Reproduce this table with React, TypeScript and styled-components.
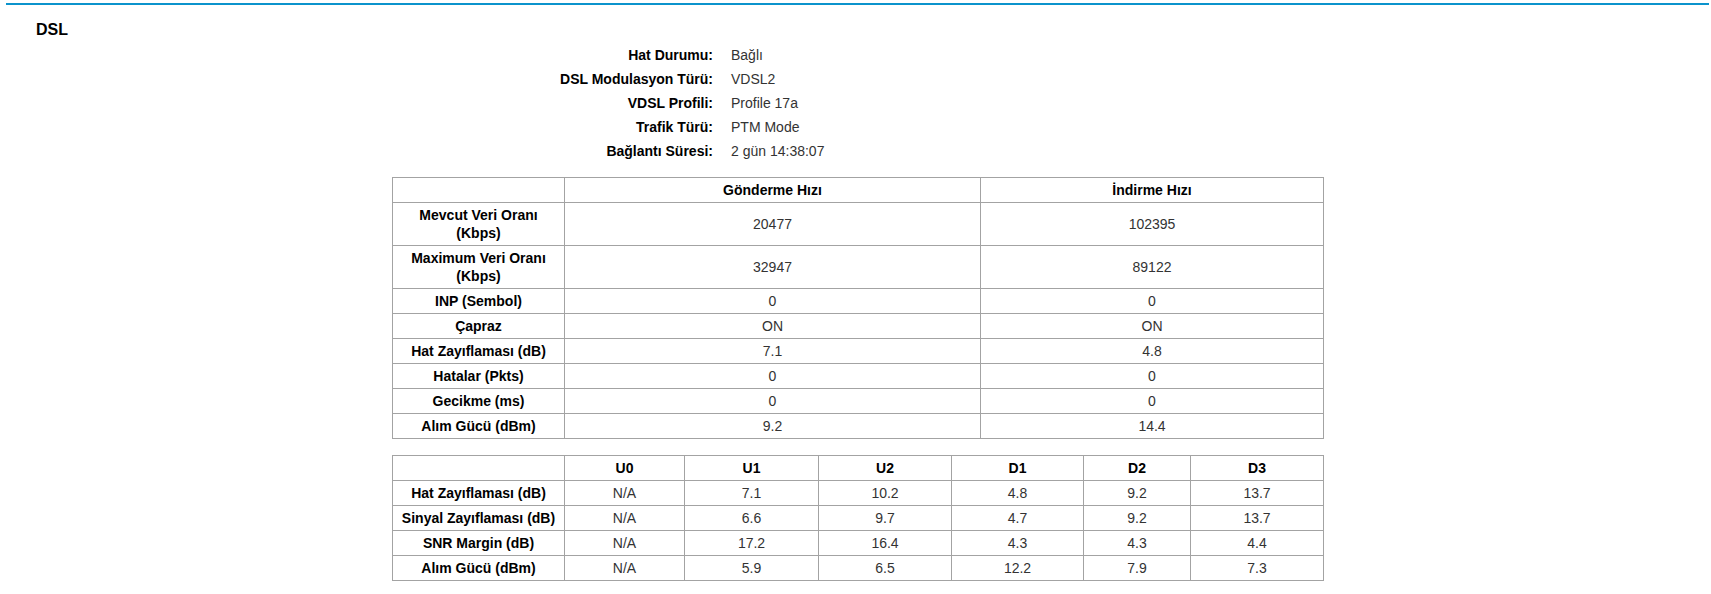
import React from "react";
import styled, { createGlobalStyle } from "styled-components";

const GlobalStyle = createGlobalStyle`
  html, body {
    margin: 0;
    padding: 0;
    background: #ffffff;
  }
  body {
    font-family: "Liberation Sans", Arial, Helvetica, sans-serif;
    color: #333333;
  }
`;

const Page = styled.div`
  padding: 0 2px 0 6px;
`;

const TopRule = styled.div`
  margin-top: 3px;
  height: 2px;
  background: #0b93cc;
`;

const Title = styled.h2`
  margin: 16px 0 0 30px;
  font-size: 16px;
  line-height: 18px;
  font-weight: bold;
  color: #000000;
`;

const Content = styled.div`
  width: 931px;
  margin: 0 auto;
`;

const InfoGrid = styled.div`
  display: grid;
  grid-template-columns: 321px 1fr;
  column-gap: 18px;
  margin-top: 4px;
  font-size: 14px;
  line-height: 24px;
`;

const InfoLabel = styled.div`
  text-align: right;
  font-weight: bold;
  color: #000000;
  white-space: nowrap;
`;

const InfoValue = styled.div`
  color: #333333;
  white-space: nowrap;
`;

const DataTable = styled.table<{ $gap: number }>`
  width: 931px;
  margin-top: ${(p) => p.$gap}px;
  border-collapse: collapse;
  table-layout: fixed;
  font-size: 14px;
  line-height: 18px;
`;

const Col = styled.col<{ $w: number }>`
  width: ${(p) => p.$w}px;
`;

const HeadCell = styled.th`
  border: 1px solid #a3a3a3;
  padding: 3px 5px;
  text-align: center;
  vertical-align: middle;
  font-weight: bold;
  color: #000000;
`;

const Cell = styled.td`
  border: 1px solid #a3a3a3;
  padding: 3px 5px;
  text-align: center;
  vertical-align: middle;
  color: #333333;
`;

const info: [string, string][] = [
  ["Hat Durumu:", "Bağlı"],
  ["DSL Modulasyon Türü:", "VDSL2"],
  ["VDSL Profili:", "Profile 17a"],
  ["Trafik Türü:", "PTM Mode"],
  ["Bağlantı Süresi:", "2 gün 14:38:07"],
];

const rateRows: [string, string, string][] = [
  ["Mevcut Veri Oranı (Kbps)", "20477", "102395"],
  ["Maximum Veri Oranı (Kbps)", "32947", "89122"],
  ["INP (Sembol)", "0", "0"],
  ["Çapraz", "ON", "ON"],
  ["Hat Zayıflaması (dB)", "7.1", "4.8"],
  ["Hatalar (Pkts)", "0", "0"],
  ["Gecikme (ms)", "0", "0"],
  ["Alım Gücü (dBm)", "9.2", "14.4"],
];

const bandHeads = ["U0", "U1", "U2", "D1", "D2", "D3"];
const bandWidths = [172, 120, 134, 133, 132, 107, 133];

const bandRows: [string, string[]][] = [
  ["Hat Zayıflaması (dB)", ["N/A", "7.1", "10.2", "4.8", "9.2", "13.7"]],
  ["Sinyal Zayıflaması (dB)", ["N/A", "6.6", "9.7", "4.7", "9.2", "13.7"]],
  ["SNR Margin (dB)", ["N/A", "17.2", "16.4", "4.3", "4.3", "4.4"]],
  ["Alım Gücü (dBm)", ["N/A", "5.9", "6.5", "12.2", "7.9", "7.3"]],
];

export default function App() {
  return (
    <>
      <GlobalStyle />
      <Page>
        <TopRule />
        <Title>DSL</Title>
        <Content>
          <InfoGrid>
            {info.map(([label, value]) => (
              <React.Fragment key={label}>
                <InfoLabel>{label}</InfoLabel>
                <InfoValue>{value}</InfoValue>
              </React.Fragment>
            ))}
          </InfoGrid>

          <DataTable $gap={14}>
            <colgroup>
              <Col $w={172} />
              <Col $w={416} />
              <Col $w={343} />
            </colgroup>
            <thead>
              <tr>
                <HeadCell />
                <HeadCell>Gönderme Hızı</HeadCell>
                <HeadCell>İndirme Hızı</HeadCell>
              </tr>
            </thead>
            <tbody>
              {rateRows.map(([label, up, down]) => (
                <tr key={label}>
                  <HeadCell>{label}</HeadCell>
                  <Cell>{up}</Cell>
                  <Cell>{down}</Cell>
                </tr>
              ))}
            </tbody>
          </DataTable>

          <DataTable $gap={16}>
            <colgroup>
              {bandWidths.map((w, i) => (
                <Col key={i} $w={w} />
              ))}
            </colgroup>
            <thead>
              <tr>
                <HeadCell />
                {bandHeads.map((h) => (
                  <HeadCell key={h}>{h}</HeadCell>
                ))}
              </tr>
            </thead>
            <tbody>
              {bandRows.map(([label, values]) => (
                <tr key={label}>
                  <HeadCell>{label}</HeadCell>
                  {values.map((v, i) => (
                    <Cell key={i}>{v}</Cell>
                  ))}
                </tr>
              ))}
            </tbody>
          </DataTable>
        </Content>
      </Page>
    </>
  );
}
